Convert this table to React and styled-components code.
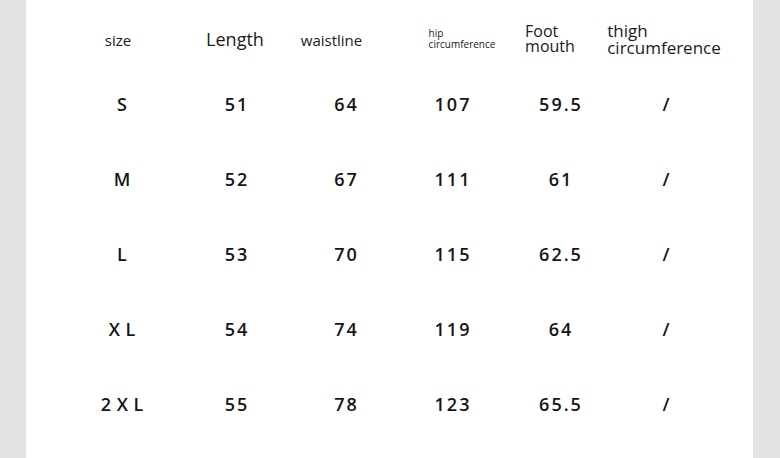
import React from "react";
import styled, { createGlobalStyle } from "styled-components";

const GlobalStyle = createGlobalStyle`
  html, body {
    margin: 0;
    padding: 0;
    background: #e3e3e3;
  }
`;

const Page = styled.div`
  width: 780px;
  height: 458px;
  display: flex;
  background: #e3e3e3;
  overflow: hidden;
`;

const Sheet = styled.div`
  margin-left: 26px;
  width: 727px;
  height: 458px;
  background: #ffffff;
  padding: 12px 0 0 39px;
  box-sizing: border-box;
`;

const Grid = styled.div`
  display: grid;
  grid-template-columns: 114px 114px 105px 108px 108px 104px;
  grid-template-rows: 54px repeat(5, 75px);
  align-items: center;
`;

const HeadCell = styled.div`
  display: flex;
  justify-content: center;
  padding-left: ${(p) => (p.$shift > 0 ? p.$shift * 2 : 0)}px;
  padding-right: ${(p) => (p.$shift < 0 ? -p.$shift * 2 : 0)}px;
  padding-top: ${(p) => p.$top || 0}px;
  white-space: nowrap;
`;

const HeadText = styled.div`
  display: flex;
  flex-direction: column;
  align-items: flex-start;
  font-family: "Open Sans", "Noto Sans", sans-serif;
  font-size: ${(p) => p.$size}px;
  color: #1a1a1a;
`;

const HeadLine = styled.div`
  height: ${(p) => p.$lh}px;
  line-height: ${(p) => p.$lh}px;
`;

const Cell = styled.div`
  text-align: center;
  font-family: "Open Sans", "Noto Sans", sans-serif;
  font-weight: 600;
  font-size: 18px;
  letter-spacing: 2px;
  word-spacing: -3px;
  color: #151515;
  padding-left: 2px;
  white-space: pre;
`;

const headers = [
  { lines: ["size"], size: 15, lh: 20, shift: -4, top: 2 },
  { lines: ["Length"], size: 18, lh: 22, shift: -1, top: 0 },
  { lines: ["waistline"], size: 15, lh: 20, shift: -14, top: 2 },
  { lines: ["hip", "circumference"], size: 10, lh: 11, shift: 10, top: 0 },
  { lines: ["Foot", "mouth"], size: 16, lh: 15, shift: -10, top: 0 },
  { lines: ["thigh", "circumference"], size: 17, lh: 17, shift: -2, top: 0 },
];

const rows = [
  ["S", "51", "64", "107", "59.5", "/"],
  ["M", "52", "67", "111", "61", "/"],
  ["L", "53", "70", "115", "62.5", "/"],
  ["X L", "54", "74", "119", "64", "/"],
  ["2 X L", "55", "78", "123", "65.5", "/"],
];

export default function App() {
  return (
    <>
      <GlobalStyle />
      <Page>
        <Sheet>
          <Grid>
            {headers.map((h, i) => (
              <HeadCell key={i} $shift={h.shift} $top={h.top}>
                <HeadText $size={h.size}>
                  {h.lines.map((l, j) => (
                    <HeadLine key={j} $lh={h.lh}>
                      {l}
                    </HeadLine>
                  ))}
                </HeadText>
              </HeadCell>
            ))}
            {rows.map((r, i) =>
              r.map((v, j) => <Cell key={i + "-" + j}>{v}</Cell>)
            )}
          </Grid>
        </Sheet>
      </Page>
    </>
  );
}
